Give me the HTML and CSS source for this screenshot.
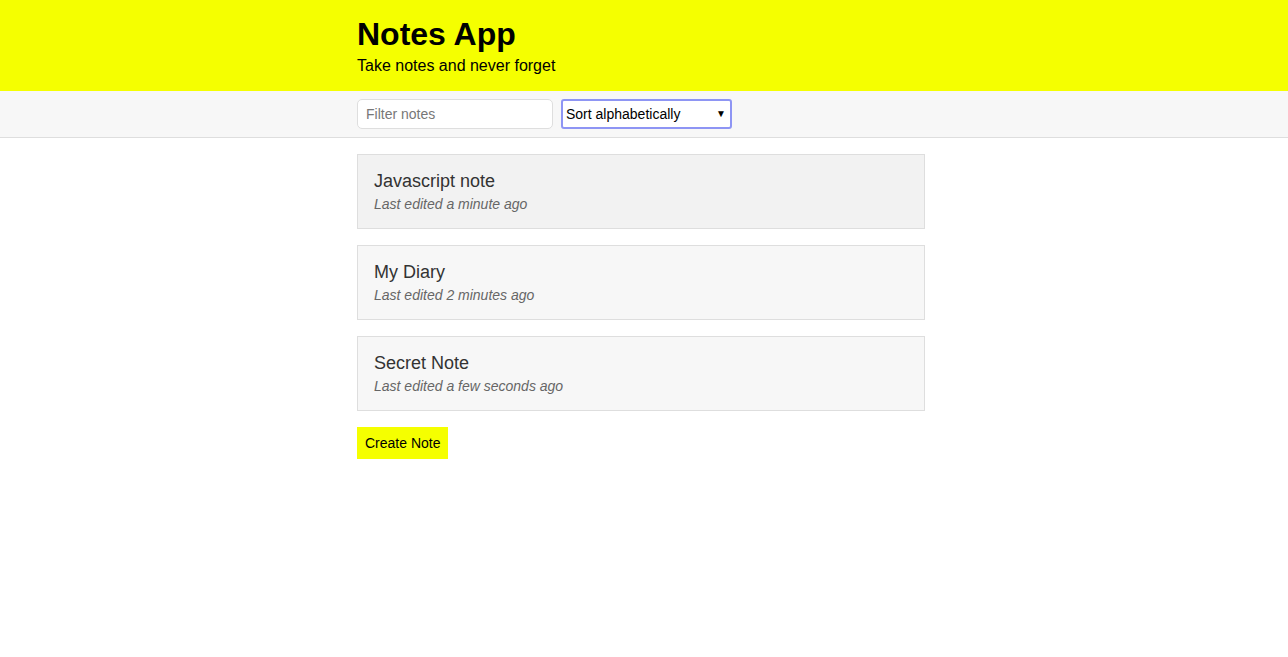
FILE: index.html
```html
<!DOCTYPE html>
<html>
<head>
    <meta charset="UTF-8" />
    <title>Notes App</title>
    <link rel="stylesheet" href="styles.css">
</head>
<body>

    <!-- Header -->
    <header class="header">
        <div class="container">
            <h1 class="header-title">Notes App</h1>
            <p class="header-subtitle">Take notes and never forget</p>
        </div>
    </header>

    <!-- Filter / sort bar -->
    <div class="actions">
        <div class="container actions-row">
            <input class="input" type="text" placeholder="Filter notes">
            <div class="dropdown">
                <select class="dropdown-select">
                    <option>Sort alphabetically</option>
                    <option>Sort by last edited</option>
                    <option>Sort by recently created</option>
                </select>
                <span class="dropdown-arrow">&#9660;</span>
            </div>
        </div>
    </div>

    <!-- Notes -->
    <div class="container main">
        <a class="list-item list-item-hover" href="#">
            <p class="list-item-title">Javascript note</p>
            <p class="list-item-subtitle">Last edited a minute ago</p>
        </a>
        <a class="list-item" href="#">
            <p class="list-item-title">My Diary</p>
            <p class="list-item-subtitle">Last edited 2 minutes ago</p>
        </a>
        <a class="list-item" href="#">
            <p class="list-item-title">Secret Note</p>
            <p class="list-item-subtitle">Last edited a few seconds ago</p>
        </a>
        <button class="button">Create Note</button>
    </div>

</body>
</html>
```

FILE: styles.css
```css
html {
    width: 100%;
    height: 100%;
}

body {
    margin: 0;
    font-family: "Liberation Sans", Arial, sans-serif;
    font-size: 16px;
    color: #333;
    background: #fff;
}

.container {
    width: 574px;
    margin: 0 auto;
}

/* Header */
.header {
    background: #f5ff00;
    padding: 16px 0;
    color: #000;
}

.header-title {
    margin: 0 0 4px;
    font-size: 32px;
    font-weight: bold;
}

.header-subtitle {
    margin: 0;
    font-size: 16px;
}

/* Filter bar */
.actions {
    background: #f7f7f7;
    border-bottom: 1px solid #dedede;
    padding: 8px 0;
}

.actions-row {
    display: flex;
    gap: 8px;
}

.input {
    box-sizing: border-box;
    width: 196px;
    height: 30px;
    margin: 0;
    padding: 0 8px;
    border: 1px solid #dedede;
    border-radius: 5px;
    background: #fff;
    font-family: "Liberation Sans", Arial, sans-serif;
    font-size: 14px;
    color: #333;
    outline: none;
}

.input::placeholder {
    color: #777;
}

.dropdown {
    position: relative;
    width: 171px;
    height: 30px;
}

.dropdown-select {
    -webkit-appearance: none;
    appearance: none;
    box-sizing: border-box;
    width: 100%;
    height: 100%;
    margin: 0;
    padding: 0 3px;
    border: 2px solid #8e95f4;
    border-radius: 3px;
    background: #fff;
    font-family: "Liberation Sans", Arial, sans-serif;
    font-size: 14px;
    color: #000;
    outline: none;
}

.dropdown-arrow {
    position: absolute;
    right: 6px;
    top: 10px;
    font-size: 10px;
    line-height: 10px;
    color: #000;
    pointer-events: none;
}

/* Notes list */
.main {
    padding-top: 16px;
}

.list-item {
    display: block;
    width: 568px;
    box-sizing: border-box;
    margin-bottom: 16px;
    padding: 16px;
    border: 1px solid #dedede;
    background: #f7f7f7;
    text-decoration: none;
    color: #333;
}

.list-item-hover {
    background: #f2f2f2;
}

.list-item-title {
    margin: 0 0 5px;
    font-size: 18px;
    line-height: 20px;
}

.list-item-subtitle {
    margin: 0;
    font-size: 14px;
    line-height: 16px;
    font-style: italic;
    color: #666;
}

.button {
    height: 32px;
    margin: 0;
    padding: 0 8px;
    border: none;
    background: #f5ff00;
    font-family: "Liberation Sans", Arial, sans-serif;
    font-size: 14px;
    color: #000;
    cursor: pointer;
}
```
